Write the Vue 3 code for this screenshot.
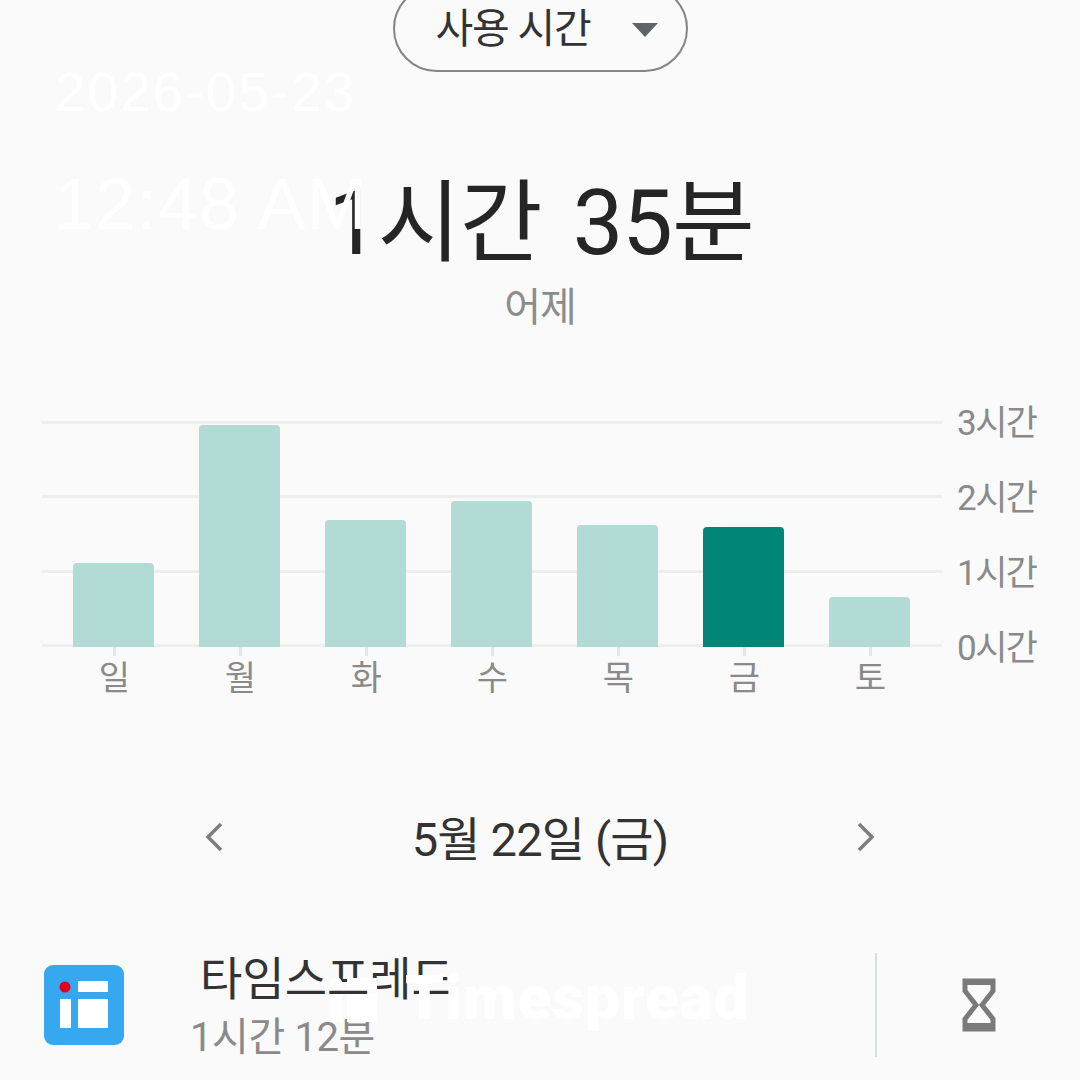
<template>
  <div class="page">
    <!-- 상단 드롭다운 -->
    <div class="pill-row">
      <div class="pill">
        <span class="pill-text">사용 시간</span>
        <span class="caret"></span>
      </div>
    </div>

    <div class="total">1시간 35분</div>
    <div class="day">어제</div>

    <!-- 주간 차트 -->
    <div class="chart">
      <div class="plot-col">
        <div class="plot">
          <div class="grid">
            <div v-for="n in 4" :key="n" class="grid-line"></div>
          </div>
          <div class="bars">
            <div
              v-for="bar in bars"
              :key="bar.label"
              class="bar"
              :class="{ active: bar.active }"
              :style="{ height: bar.height + 'px' }"
            ></div>
          </div>
        </div>
        <div class="weekdays">
          <div v-for="bar in bars" :key="bar.label" class="weekday">
            <span class="tick"></span>
            <span class="weekday-text">{{ bar.label }}</span>
          </div>
        </div>
      </div>
      <div class="y-labels">
        <span v-for="label in yLabels" :key="label" class="y-label">{{ label }}</span>
      </div>
    </div>

    <!-- 날짜 이동 -->
    <div class="date-nav">
      <svg class="chev" width="20" height="30" viewBox="0 0 20 30">
        <path d="M17 2 L4 15 L17 28" />
      </svg>
      <span class="date-text">5월 22일 (금)</span>
      <svg class="chev" width="20" height="30" viewBox="0 0 20 30">
        <path d="M3 2 L16 15 L3 28" />
      </svg>
    </div>

    <!-- 앱 사용 항목 -->
    <div class="app-row">
      <svg class="app-icon" width="80" height="80" viewBox="0 0 80 80">
        <rect width="80" height="80" rx="9" fill="#35a8f0" />
        <rect x="34" y="16" width="30" height="11" fill="#fff" />
        <rect x="16" y="34" width="11" height="29" fill="#fff" />
        <rect x="34" y="34" width="30" height="29" fill="#fff" />
        <circle cx="21" cy="22" r="5.5" fill="#e2001a" />
      </svg>
      <div class="app-text">
        <div class="app-name">타임스프레드</div>
        <div class="app-time">1시간 12분</div>
      </div>
      <div class="divider"></div>
      <div class="timer-cell">
        <svg width="34" height="54" viewBox="0 0 34 54">
          <path class="glass" d="M3 3 H31 V13 L20 27 L31 41 V51 H3 V41 L14 27 L3 13 Z" />
          <path d="M1 1 H33 V7 H1 Z M1 45 H33 V53 H1 Z" fill="#7a7a7a" />
        </svg>
      </div>
    </div>

    <!-- 워터마크 -->
    <div class="mark mark-date">2026-05-23</div>
    <div class="mark mark-time">12:48 AM</div>
    <div class="mark mark-logo">
      <svg width="47" height="46" viewBox="0 0 47 46">
        <rect x="17" y="2" width="30" height="11" fill="#fff" />
        <rect x="0" y="18" width="12" height="28" fill="#fff" />
        <rect x="17" y="18" width="30" height="28" fill="#fff" />
        <circle cx="6" cy="7" r="6" fill="#fff" />
      </svg>
      <span class="logo-text">Timespread</span>
    </div>
  </div>
</template>

<script setup>
const bars = [
  { label: '일', height: 84 },
  { label: '월', height: 222 },
  { label: '화', height: 127 },
  { label: '수', height: 146 },
  { label: '목', height: 122 },
  { label: '금', height: 120, active: true },
  { label: '토', height: 50 },
]

const yLabels = ['3시간', '2시간', '1시간', '0시간']
</script>

<style>
body {
  background: #fafafa;
}
</style>

<style scoped>
.page {
  position: relative;
  width: 1080px;
  height: 1080px;
  overflow: hidden;
  background: #fafafa;
  font-family: Roboto, "Noto Sans CJK KR", sans-serif;
  color: #252525;
}

.pill-row {
  display: flex;
  justify-content: center;
  margin-top: -15px;
}

.pill {
  box-sizing: border-box;
  width: 295px;
  height: 87px;
  border: 2px solid #858585;
  border-radius: 44px;
  display: flex;
  align-items: center;
  padding: 0 28px 0 41px;
  justify-content: space-between;
}

.pill-text {
  font-size: 41px;
  line-height: 50px;
  color: #333;
  letter-spacing: -1.2px;
}

.caret {
  width: 0;
  height: 0;
  border-left: 13px solid transparent;
  border-right: 13px solid transparent;
  border-top: 14px solid #5f6468;
  margin-top: 3px;
}

.total {
  margin-top: 100px;
  height: 104px;
  line-height: 104px;
  text-align: center;
  font-size: 90px;
  letter-spacing: -1px;
  word-spacing: 10px;
  padding-left: 2px;
}

.day {
  margin-top: 7px;
  height: 50px;
  line-height: 50px;
  text-align: center;
  font-size: 40px;
  color: #8c8c8c;
  letter-spacing: -1px;
}

.chart {
  display: flex;
  margin-top: 88px;
  padding-left: 42px;
}

.plot-col {
  width: 900px;
}

.plot {
  position: relative;
  height: 226px;
}

.grid {
  position: absolute;
  inset: 0;
  display: flex;
  flex-direction: column;
  justify-content: space-between;
}

.grid-line {
  height: 3px;
  background: #eeeeee;
}

.bars {
  position: relative;
  height: 100%;
  display: flex;
  align-items: flex-end;
  gap: 45px;
  padding-left: 31px;
}

.bar {
  width: 81px;
  background: #b2dbd5;
  border-radius: 4px 4px 0 0;
}

.bar.active {
  background: #008577;
}

.weekdays {
  display: flex;
  gap: 45px;
  padding-left: 32px;
}

.weekday {
  width: 81px;
  display: flex;
  flex-direction: column;
  align-items: center;
}

.tick {
  width: 3px;
  height: 9px;
  background: #e6e6e6;
}

.weekday-text {
  font-size: 34px;
  line-height: 44px;
  color: #8a8a8a;
}

.y-labels {
  height: 265px;
  margin-top: -17px;
  margin-left: 15px;
  display: flex;
  flex-direction: column;
  justify-content: space-between;
}

.y-label {
  height: 40px;
  line-height: 40px;
  font-size: 35px;
  color: #8a8a8a;
  letter-spacing: -1.5px;
}

.date-nav {
  display: flex;
  align-items: center;
  justify-content: space-between;
  margin-top: 107px;
  height: 60px;
  padding: 0 204px;
}

.chev path {
  fill: none;
  stroke: #7d7d7d;
  stroke-width: 3.5;
}

.date-text {
  margin-top: -3px;
  font-size: 47px;
  color: #333;
  letter-spacing: -0.8px;
}

.app-row {
  display: flex;
  align-items: center;
  margin-top: 86px;
  height: 104px;
  padding-left: 44px;
}

.app-text {
  width: 685px;
  margin-left: 66px;
  padding-top: 6px;
}

.app-name {
  padding-left: 10px;
  font-size: 46px;
  line-height: 52px;
  color: #333;
}

.app-time {
  margin-top: 8px;
  font-size: 40px;
  line-height: 50px;
  color: #8a8a8a;
  letter-spacing: -0.4px;
}

.divider {
  width: 2px;
  height: 104px;
  background: #d9dfe1;
}

.timer-cell {
  flex: 1;
  display: flex;
  justify-content: center;
}

.glass {
  fill: none;
  stroke: #7a7a7a;
  stroke-width: 5;
}

.mark {
  position: absolute;
  color: #fff;
  font-family: "Liberation Sans", Arial, sans-serif;
  white-space: nowrap;
}

.mark-date {
  left: 55px;
  top: 62px;
  font-size: 55px;
  line-height: 60px;
  letter-spacing: 2px;
}

.mark-time {
  left: 54px;
  top: 164px;
  font-size: 72px;
  line-height: 80px;
  letter-spacing: 1.2px;
}

.mark-logo {
  left: 330px;
  top: 976px;
  display: flex;
  align-items: center;
  gap: 28px;
}

.logo-text {
  margin-top: -2px;
  font-family: Roboto, sans-serif;
  font-size: 62px;
  font-weight: 900;
  line-height: 46px;
  letter-spacing: 1px;
}
</style>
